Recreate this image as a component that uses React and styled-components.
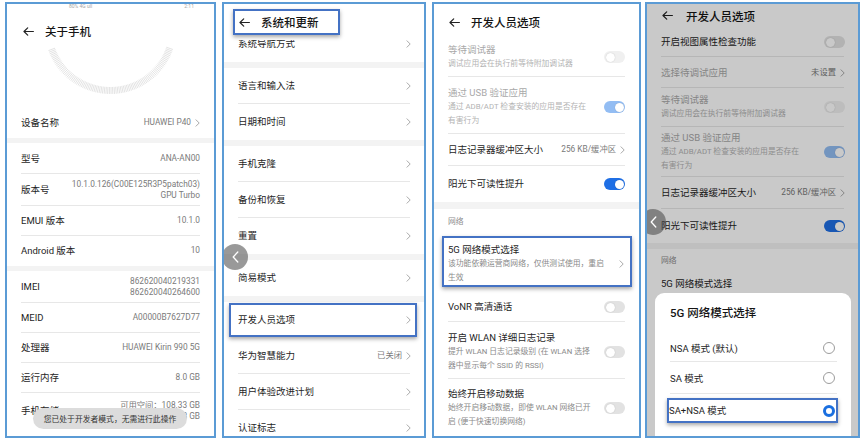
import React from "react";
import styled, { createGlobalStyle } from "styled-components";

const GlobalStyle = createGlobalStyle`
  html, body {
    margin: 0;
    padding: 0;
    background: #fff;
  }
  body {
    font-family: Roboto, "Noto Sans CJK SC", sans-serif;
    color: #1e1e1e;
  }
`;

const Page = styled.div`
  display: flex;
  align-items: flex-start;
  gap: 6px;
  width: 867px;
  height: 444px;
  padding: 2px 0 0 5px;
  box-sizing: border-box;
  overflow: hidden;
`;

const Panel = styled.div`
  position: relative;
  flex-shrink: 0;
  display: flex;
  flex-direction: column;
  width: ${(p) => p.$w}px;
  height: 436px;
  margin-left: ${(p) => p.$ml || 0}px;
  border: 2px solid #5b9bd5;
  box-sizing: border-box;
  background: #fff;
  overflow: hidden;
`;

const StatusBar = styled.div`
  display: flex;
  justify-content: space-between;
  height: 8px;
  padding: 0 20px 0 62px;
  font-size: 5px;
  line-height: 4px;
  color: #a5a5a5;
  flex-shrink: 0;
  overflow: hidden;
`;

const Header = styled.div`
  position: relative;
  z-index: 1;
  display: flex;
  align-items: center;
  gap: ${(p) => p.$gap || 11}px;
  height: ${(p) => p.$h}px;
  padding: ${(p) => p.$pt || 0}px 0 0 ${(p) => p.$pl}px;
  box-sizing: border-box;
  flex-shrink: 0;
  background: #fff;
  font-size: 11.5px;
  font-weight: 500;
  color: #151515;
`;

const HeaderMark = styled.div`
  display: flex;
  align-items: center;
  gap: 11px;
  height: 26px;
  padding: 0 19px 0 4px;
  border: 2px solid #4472c4;
  box-sizing: border-box;
  box-shadow: 0 2px 4px rgba(0, 0, 0, 0.35);
`;

const DialBox = styled.div`
  height: 63px;
  flex-shrink: 0;
  svg {
    display: block;
    overflow: visible;
  }
`;

const List = styled.div`
  display: flex;
  flex-direction: column;
  margin-top: ${(p) => p.$mt || 0}px;
`;

const lineBg = `
  background-image: linear-gradient(#e7e7e7, #e7e7e7);
  background-repeat: no-repeat;
  background-size: calc(100% - 28px) 1px;
  background-position: 14px 100%;
`;

const Row = styled.div`
  display: flex;
  align-items: center;
  justify-content: space-between;
  gap: 8px;
  height: ${(p) => p.$h}px;
  padding: 0 ${(p) => p.$pr ?? 14}px 0 14px;
  box-sizing: border-box;
  flex-shrink: 0;
  ${(p) => (p.$line ? lineBg : "")}
`;

const MultiRow = styled.div`
  display: flex;
  align-items: center;
  justify-content: space-between;
  gap: 8px;
  padding: ${(p) => p.$pad || "9px 14px 6px 14px"};
  flex-shrink: 0;
  ${(p) => (p.$line ? lineBg : "")}
`;

const Texts = styled.div`
  display: flex;
  flex-direction: column;
  white-space: nowrap;
`;

const Label = styled.span`
  font-size: 9.5px;
  line-height: 14px;
  white-space: nowrap;
  color: ${(p) => (p.$muted ? "#a9a9a9" : "#1e1e1e")};
`;

const Sub = styled.span`
  display: block;
  font-size: 7.8px;
  line-height: 14px;
  white-space: nowrap;
  color: ${(p) => (p.$muted ? "#b3b3b3" : "#8a8a8a")};
`;

const Value = styled.div`
  display: flex;
  align-items: center;
  gap: 4px;
  font-size: 8.3px;
  line-height: 11.5px;
  color: #7a7a7a;
  text-align: right;
  white-space: nowrap;
`;

const ValueLines = styled.div`
  display: flex;
  flex-direction: column;
  align-items: flex-end;
`;

const Band = styled.div`
  height: ${(p) => p.$h}px;
  flex-shrink: 0;
  background: #f3f3f3;
`;

const Section = styled.div`
  display: flex;
  align-items: center;
  height: ${(p) => p.$h}px;
  padding-left: 14px;
  flex-shrink: 0;
  font-size: 7.8px;
  color: #8c8c8c;
`;

const Mark = styled.div`
  display: flex;
  align-items: center;
  justify-content: space-between;
  margin: ${(p) => p.$m};
  padding: ${(p) => p.$pad};
  height: ${(p) => (p.$h ? `${p.$h}px` : "auto")};
  border: 2px solid #4472c4;
  box-sizing: border-box;
  flex-shrink: 0;
  background: #fff;
  box-shadow: 0 2px 4px rgba(0, 0, 0, 0.35);
`;

const Track = styled.span`
  display: flex;
  align-items: center;
  justify-content: ${(p) => (p.$on ? "flex-end" : "flex-start")};
  width: 21px;
  height: 12px;
  padding: 0 1.5px;
  box-sizing: border-box;
  border-radius: 6px;
  flex-shrink: 0;
  background: ${(p) =>
    p.$on ? (p.$dim ? "#93bdf3" : "#1f6fe5") : p.$dim ? "#f0f0f0" : "#e2e2e2"};
`;

const Knob = styled.span`
  width: 9px;
  height: 9px;
  border-radius: 50%;
  background: #fff;
  box-shadow: 0 0 1px rgba(0, 0, 0, 0.25);
`;

const EdgeBack = styled.div`
  position: absolute;
  z-index: 3;
  left: ${(p) => p.$x}px;
  top: ${(p) => p.$y}px;
  display: flex;
  align-items: center;
  justify-content: center;
  width: 26px;
  height: 26px;
  border-radius: 50%;
  background: rgba(70, 70, 70, 0.55);
`;

const Toast = styled.div`
  position: absolute;
  left: 26px;
  top: 404px;
  display: flex;
  align-items: center;
  justify-content: center;
  width: 154px;
  height: 21px;
  border-radius: 11px;
  background: #dcdcdc;
  font-size: 7.8px;
  color: #333;
`;

const Dim = styled.div`
  position: absolute;
  inset: 0;
  z-index: 1;
  background: rgba(0, 0, 0, 0.21);
`;

const Sheet = styled.div`
  position: absolute;
  z-index: 2;
  left: 8px;
  right: 7px;
  top: 289px;
  bottom: -20px;
  display: flex;
  flex-direction: column;
  border-radius: 9px;
  background: #fff;
`;

const SheetTitle = styled.div`
  padding: 12px 15px 0;
  margin-bottom: 12px;
  font-size: 11.5px;
  line-height: 16px;
  font-weight: 500;
  color: #151515;
`;

const Option = styled.div`
  display: flex;
  align-items: center;
  justify-content: space-between;
  height: ${(p) => p.$h}px;
  padding: 0 16px 0 15px;
  font-size: 9.5px;
  color: #1e1e1e;
  background-image: linear-gradient(#e7e7e7, #e7e7e7);
  background-repeat: no-repeat;
  background-size: calc(100% - 29px) 1px;
  background-position: 15px 100%;
`;

const Radio = styled.span`
  width: 12px;
  height: 12px;
  border-radius: 50%;
  box-sizing: border-box;
  background: #fff;
  border: ${(p) => (p.$on ? "3.5px solid #1a6fe0" : "1px solid #9c9c9c")};
`;

const Arrow = () => (
  <svg width="11" height="9" viewBox="0 0 11 9" fill="none" stroke="#222" strokeWidth="1.2" strokeLinecap="round" strokeLinejoin="round">
    <path d="M10.4 4.5H1M4.7 0.8 1 4.5l3.7 3.7" />
  </svg>
);

const Chevron = ({ color = "#a9a9a9" }) => (
  <svg width="5" height="8" viewBox="0 0 5 8" fill="none" stroke={color} strokeWidth="1" strokeLinecap="round" strokeLinejoin="round">
    <path d="M1 0.8 4.2 4 1 7.2" />
  </svg>
);

const BackGlyph = () => (
  <svg width="7" height="12" viewBox="0 0 7 12" fill="none" stroke="#fff" strokeWidth="1.3" strokeLinecap="round" strokeLinejoin="round">
    <path d="M5.8 1 1.2 6l4.6 5" />
  </svg>
);

const Toggle = ({ on, dim }) => (
  <Track $on={on} $dim={dim}>
    <Knob />
  </Track>
);

// tick ring around the storage dial, centred above the block
function Dial() {
  const ticks = [];
  for (let a = 19; a <= 161.2; a += 1.5) {
    const r = (a * Math.PI) / 180;
    const c = Math.cos(r);
    const s = Math.sin(r);
    ticks.push(
      <line key={a} x1={103.5 + 59 * c} y1={-17 + 59 * s} x2={103.5 + 66 * c} y2={-17 + 66 * s} />
    );
  }
  return (
    <DialBox>
      <svg width="207" height="63" stroke="#d4d4d4" strokeWidth="0.65">
        {ticks}
      </svg>
    </DialBox>
  );
}

function AboutPhone() {
  return (
    <Panel $w={211}>
      <StatusBar>
        <span>80%  4G  ull</span>
        <span>2:11</span>
      </StatusBar>
      <Header $h={33} $pt={5} $pl={16}>
        <Arrow />
        关于手机
      </Header>
      <Dial />
      <Row $h={30}>
        <Label>设备名称</Label>
        <Value>
          HUAWEI P40 <Chevron />
        </Value>
      </Row>
      <Band $h={5} />
      <Row $h={31} $line>
        <Label>型号</Label>
        <Value>ANA-AN00</Value>
      </Row>
      <Row $h={32} $line>
        <Label>版本号</Label>
        <ValueLines>
          <Value>10.1.0.126(C00E125R3P5patch03)</Value>
          <Value>GPU Turbo</Value>
        </ValueLines>
      </Row>
      <Row $h={30} $line>
        <Label>EMUI 版本</Label>
        <Value>10.1.0</Value>
      </Row>
      <Row $h={30}>
        <Label>Android 版本</Label>
        <Value>10</Value>
      </Row>
      <Band $h={5} />
      <Row $h={32} $line>
        <Label>IMEI</Label>
        <ValueLines>
          <Value>862620040219331</Value>
          <Value>862620040264600</Value>
        </ValueLines>
      </Row>
      <Row $h={30} $line>
        <Label>MEID</Label>
        <Value>A00000B7627D77</Value>
      </Row>
      <Row $h={30} $line>
        <Label>处理器</Label>
        <Value>HUAWEI Kirin 990 5G</Value>
      </Row>
      <Row $h={30} $line>
        <Label>运行内存</Label>
        <Value>8.0 GB</Value>
      </Row>
      <Row $h={36}>
        <Label>手机存储</Label>
        <ValueLines>
          <Value>可用空间：108.33  GB</Value>
          <Value>总容量：128  GB</Value>
        </ValueLines>
      </Row>
      <Toast>您已处于开发者模式，无需进行此操作</Toast>
    </Panel>
  );
}

const systemRows = [
  { items: [["系统导航方式"]] },
  { items: [["语言和输入法"], ["日期和时间"]] },
  { items: [["手机克隆"], ["备份和恢复"], ["重置"]] },
  { items: [["简易模式"]] },
];

function SystemUpdate() {
  return (
    <Panel $w={204}>
      <Header $h={36} $pl={9}>
        <HeaderMark>
          <Arrow />
          系统和更新
        </HeaderMark>
      </Header>
      <List $mt={-14}>
        {systemRows.map((group, gi) => (
          <React.Fragment key={gi}>
            {gi > 0 && <Band $h={6} />}
            {group.items.map(([label], i) => (
              <Row key={label} $h={36} $pr={13} $line={i < group.items.length - 1}>
                <Label>{label}</Label>
                <Chevron />
              </Row>
            ))}
          </React.Fragment>
        ))}
        <Band $h={6} />
        <Mark $h={34} $m="1px 7px 1px 5px" $pad="0 4px 0 7px">
          <Label>开发人员选项</Label>
          <Chevron />
        </Mark>
        <Row $h={36} $pr={13} $line>
          <Label>华为智慧能力</Label>
          <Value>
            已关闭 <Chevron />
          </Value>
        </Row>
        <Row $h={36} $pr={13} $line>
          <Label>用户体验改进计划</Label>
          <Chevron />
        </Row>
        <Row $h={36} $pr={13}>
          <Label>认证标志</Label>
          <Chevron />
        </Row>
      </List>
      <EdgeBack $x={-2} $y={240}>
        <BackGlyph />
      </EdgeBack>
    </Panel>
  );
}

function DeveloperOptions() {
  return (
    <Panel $w={209}>
      <Header $h={30} $pt={6} $pl={15}>
        <Arrow />
        开发人员选项
      </Header>
      <MultiRow $line>
        <Texts>
          <Label $muted>等待调试器</Label>
          <Sub $muted>调试应用会在执行前等待附加调试器</Sub>
        </Texts>
        <Toggle dim />
      </MultiRow>
      <MultiRow $line>
        <Texts>
          <Label $muted>通过 USB 验证应用</Label>
          <Sub $muted>通过 ADB/ADT 检查安装的应用是否存在</Sub>
          <Sub $muted>有害行为</Sub>
        </Texts>
        <Toggle on dim />
      </MultiRow>
      <Row $h={32} $line>
        <Label>日志记录器缓冲区大小</Label>
        <Value>
          256 KB/缓冲区 <Chevron />
        </Value>
      </Row>
      <Row $h={36}>
        <Label>阳光下可读性提升</Label>
        <Toggle on />
      </Row>
      <Band $h={7} />
      <Section $h={23}>网络</Section>
      <Mark $m="4px 7px 5px 8px" $pad="5px 6px 0 4px">
        <Texts>
          <Label>5G 网络模式选择</Label>
          <Sub>该功能依赖运营商网络，仅供测试使用，重启</Sub>
          <Sub>生效</Sub>
        </Texts>
        <Chevron />
      </Mark>
      <Row $h={30} $line>
        <Label>VoNR 高清通话</Label>
        <Toggle />
      </Row>
      <MultiRow $line>
        <Texts>
          <Label>开启 WLAN 详细日志记录</Label>
          <Sub>提升 WLAN 日志记录级别 (在 WLAN 选择</Sub>
          <Sub>器中显示每个 SSID 的 RSSI)</Sub>
        </Texts>
        <Toggle />
      </MultiRow>
      <MultiRow $pad="8px 14px 6px 14px">
        <Texts>
          <Label>始终开启移动数据</Label>
          <Sub>始终开启移动数据，即使 WLAN 网络已开</Sub>
          <Sub>启 (便于快速切换网络)</Sub>
        </Texts>
        <Toggle />
      </MultiRow>
    </Panel>
  );
}

function NetworkModeDialog() {
  return (
    <Panel $w={215} $ml={-2}>
      <Header $h={23} $pl={15} $gap={13}>
        <Arrow />
        开发人员选项
      </Header>
      <Row $h={30} $pr={13} $line>
        <Label>开启视图属性检查功能</Label>
        <Toggle />
      </Row>
      <Row $h={31} $pr={13} $line>
        <Label $muted>选择待调试应用</Label>
        <Value>
          未设置 <Chevron />
        </Value>
      </Row>
      <MultiRow $line $pad="5px 13px 6px 14px">
        <Texts>
          <Label $muted>等待调试器</Label>
          <Sub $muted>调试应用会在执行前等待附加调试器</Sub>
        </Texts>
        <Toggle dim />
      </MultiRow>
      <MultiRow $line $pad="4px 13px 4px 14px">
        <Texts>
          <Label $muted>通过 USB 验证应用</Label>
          <Sub $muted>通过 ADB/ADT 检查安装的应用是否存在</Sub>
          <Sub $muted>有害行为</Sub>
        </Texts>
        <Toggle on dim />
      </MultiRow>
      <Row $h={32} $pr={13} $line>
        <Label>日志记录器缓冲区大小</Label>
        <Value>
          256 KB/缓冲区 <Chevron />
        </Value>
      </Row>
      <Row $h={34} $pr={13}>
        <Label>阳光下可读性提升</Label>
        <Toggle on />
      </Row>
      <Band $h={6} />
      <Section $h={21}>网络</Section>
      <Row $h={28}>
        <Label>5G 网络模式选择</Label>
      </Row>
      <Dim />
      <EdgeBack $x={-7} $y={205}>
        <BackGlyph />
      </EdgeBack>
      <Sheet>
        <SheetTitle>5G 网络模式选择</SheetTitle>
        <Option $h={29}>
          NSA 模式 (默认)
          <Radio />
        </Option>
        <Option $h={32}>
          SA 模式
          <Radio />
        </Option>
        <Mark $h={25} $m="4px 13px 0 12px" $pad="0 1px 0 0">
          <Label>SA+NSA 模式</Label>
          <Radio $on />
        </Mark>
      </Sheet>
    </Panel>
  );
}

export default function App() {
  return (
    <>
      <GlobalStyle />
      <Page>
        <AboutPhone />
        <SystemUpdate />
        <DeveloperOptions />
        <NetworkModeDialog />
      </Page>
    </>
  );
}
